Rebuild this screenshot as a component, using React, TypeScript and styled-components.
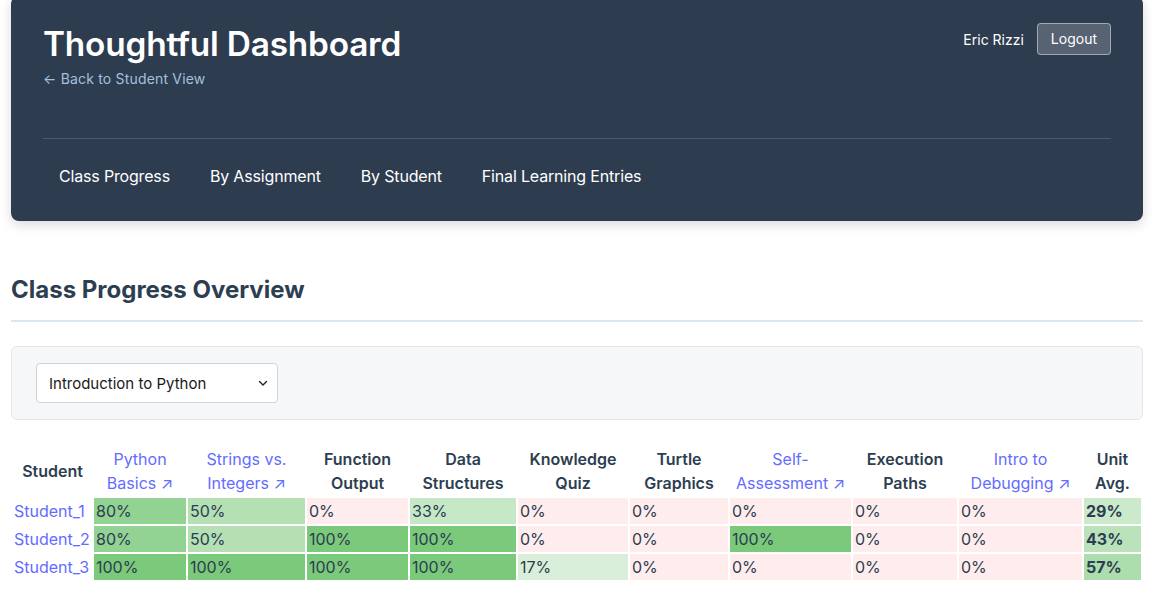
import React from "react";
import styled, { createGlobalStyle } from "styled-components";

const GlobalStyle = createGlobalStyle`
  html, body { margin: 0; padding: 0; background: #ffffff; }
  body { font-family: Inter, "Noto Sans", sans-serif; color: #2c3e50; -webkit-font-smoothing: antialiased; }
  * { box-sizing: border-box; }
`;

const Page = styled.div`
  padding: 0 15px 20px 11px;
`;

const HeaderCard = styled.header`
  margin-top: -4px;
  background: #2d3c4f;
  border-radius: 8px;
  box-shadow: 0 4px 12px rgba(0, 0, 0, 0.15);
  padding: 27px 32px 0;
  height: 225px;
  display: flex;
  flex-direction: column;
`;

const TopRow = styled.div`
  display: flex;
  justify-content: space-between;
  align-items: flex-start;
`;

const TitleBlock = styled.div`
  display: flex;
  flex-direction: column;
`;

const Title = styled.h1`
  margin: 1px 0 0;
  font-size: 33.4px;
  line-height: 40px;
  font-weight: 600;
  color: #ffffff;
  letter-spacing: -0.2px;
`;

const BackLink = styled.a`
  margin-top: 5px;
  font-size: 14px;
  line-height: 20px;
  letter-spacing: 0.18px;
  color: #a3c0df;
  text-decoration: none;
`;

const UserArea = styled.div`
  display: flex;
  align-items: center;
  gap: 13px;
`;

const UserName = styled.span`
  font-size: 14px;
  color: #ffffff;
`;

const LogoutButton = styled.button`
  font-family: inherit;
  font-size: 14px;
  line-height: 20px;
  height: 32px;
  padding: 0 13px;
  color: #ffffff;
  background: rgba(255, 255, 255, 0.2);
  border: 1px solid rgba(255, 255, 255, 0.45);
  border-radius: 4px;
`;

const Nav = styled.nav`
  margin-top: 49px;
  border-top: 1px solid rgba(255, 255, 255, 0.15);
  padding-top: 13px;
  display: flex;
  gap: 8px;
`;

const NavItem = styled.a`
  font-size: 16px;
  line-height: 24px;
  letter-spacing: -0.17px;
  padding: 12px 16px;
  color: #ffffff;
  text-decoration: none;
`;

const SectionTitle = styled.h2`
  margin: 54px 0 0;
  font-size: 24px;
  line-height: 29px;
  font-weight: 700;
  color: #2c3e50;
  padding-bottom: 16px;
  border-bottom: 2px solid #dde7f0;
`;

const FilterBox = styled.div`
  margin-top: 24px;
  background: #f6f7f9;
  border: 1px solid #e3e6ea;
  border-radius: 6px;
  padding: 16px 24px;
  display: flex;
`;

const SelectWrap = styled.div`
  position: relative;
  width: 242px;
`;

const Select = styled.select`
  appearance: none;
  -webkit-appearance: none;
  width: 100%;
  height: 40px;
  padding: 0 30px 0 12px;
  font-family: inherit;
  font-size: 15px;
  color: #1a1a1a;
  background: #ffffff;
  border: 1px solid #cfd4da;
  border-radius: 4px;
`;

const Chevron = styled.svg`
  position: absolute;
  right: 10px;
  top: 50%;
  margin-top: -5px;
  width: 10px;
  height: 10px;
  pointer-events: none;
`;

const Table = styled.table`
  margin-top: 24px;
  width: 100%;
  table-layout: fixed;
  border-collapse: separate;
  border-spacing: 2px;
  font-size: 16px;
  line-height: 24px;
`;

const HeadCell = styled.th<{ $link?: boolean }>`
  padding: 1px 0;
  text-align: center;
  vertical-align: middle;
  font-weight: ${(p) => (p.$link ? 400 : 600)};
  color: ${(p) => (p.$link ? "#646cff" : "#2c3e50")};
`;

const NameCell = styled.td`
  padding: 1px 1px;
  white-space: nowrap;
`;

const Link = styled.a`
  color: #646cff;
  text-decoration: none;
`;

const ScoreCell = styled.td<{ $bg: string; $bold?: boolean }>`
  padding: 1px 2px;
  background: ${(p) => p.$bg};
  color: #2c3e50;
  font-weight: ${(p) => (p.$bold ? 700 : 400)};
  white-space: nowrap;
`;

function scoreColor(p: number): string {
  if (p === 0) return "#ffeded";
  const dr = 19 + 1.13 * p;
  const dg = dr * 0.41;
  const r = Math.round(255 - dr);
  const g = Math.round(255 - dg);
  return `rgb(${r}, ${g}, ${r})`;
}

type Col = { label: React.ReactNode; link?: boolean; width: number };

const cols: Col[] = [
  { label: <>Python<br />Basics ↗</>, link: true, width: 92 },
  { label: <>Strings vs.<br />Integers ↗</>, link: true, width: 117 },
  { label: <>Function<br />Output</>, width: 101 },
  { label: <>Data<br />Structures</>, width: 106 },
  { label: <>Knowledge<br />Quiz</>, width: 110 },
  { label: <>Turtle<br />Graphics</>, width: 98 },
  { label: <>Self-<br />Assessment ↗</>, link: true, width: 121 },
  { label: <>Execution<br />Paths</>, width: 104 },
  { label: <>Intro to<br />Debugging ↗</>, link: true, width: 123 },
];

const rows: { name: string; scores: number[]; avg: number }[] = [
  { name: "Student_1", scores: [80, 50, 0, 33, 0, 0, 0, 0, 0], avg: 29 },
  { name: "Student_2", scores: [80, 50, 100, 100, 0, 0, 100, 0, 0], avg: 43 },
  { name: "Student_3", scores: [100, 100, 100, 100, 17, 0, 0, 0, 0], avg: 57 },
];

export default function App() {
  return (
    <>
      <GlobalStyle />
      <Page>
        <HeaderCard>
          <TopRow>
            <TitleBlock>
              <Title>Thoughtful Dashboard</Title>
              <BackLink href="#">← Back to Student View</BackLink>
            </TitleBlock>
            <UserArea>
              <UserName>Eric Rizzi</UserName>
              <LogoutButton>Logout</LogoutButton>
            </UserArea>
          </TopRow>
          <Nav>
            <NavItem href="#">Class Progress</NavItem>
            <NavItem href="#">By Assignment</NavItem>
            <NavItem href="#">By Student</NavItem>
            <NavItem href="#">Final Learning Entries</NavItem>
          </Nav>
        </HeaderCard>

        <SectionTitle>Class Progress Overview</SectionTitle>

        <FilterBox>
          <SelectWrap>
            <Select defaultValue="intro">
              <option value="intro">Introduction to Python</option>
            </Select>
            <Chevron viewBox="0 0 10 10">
              <path d="M1.5 3.5 L5 7 L8.5 3.5" fill="none" stroke="#222" strokeWidth="1.4" strokeLinecap="round" strokeLinejoin="round" />
            </Chevron>
          </SelectWrap>
        </FilterBox>

        <Table>
          <colgroup>
            <col style={{ width: 79 }} />
            {cols.map((c, i) => (
              <col key={i} style={{ width: c.width }} />
            ))}
            <col style={{ width: 57 }} />
          </colgroup>
          <thead>
            <tr>
              <HeadCell>Student</HeadCell>
              {cols.map((c, i) => (
                <HeadCell key={i} $link={c.link}>
                  {c.label}
                </HeadCell>
              ))}
              <HeadCell>
                Unit
                <br />
                Avg.
              </HeadCell>
            </tr>
          </thead>
          <tbody>
            {rows.map((r) => (
              <tr key={r.name}>
                <NameCell>
                  <Link href="#">{r.name}</Link>
                </NameCell>
                {r.scores.map((s, i) => (
                  <ScoreCell key={i} $bg={scoreColor(s)}>
                    {s}%
                  </ScoreCell>
                ))}
                <ScoreCell $bg={scoreColor(r.avg)} $bold>
                  {r.avg}%
                </ScoreCell>
              </tr>
            ))}
          </tbody>
        </Table>
      </Page>
    </>
  );
}
